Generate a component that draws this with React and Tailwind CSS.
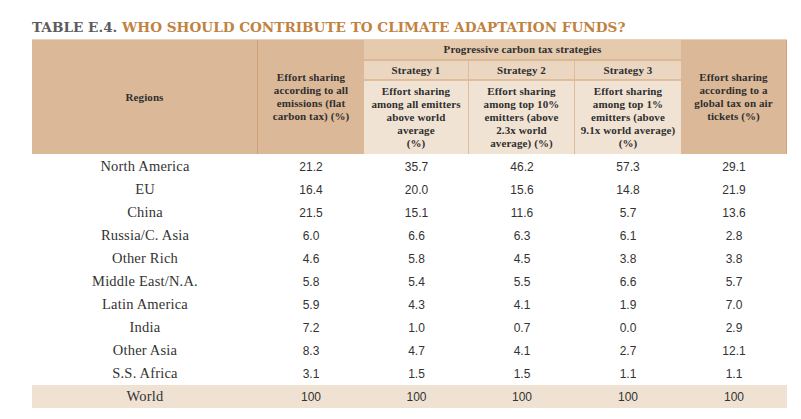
import React from "react";

const rows = [
  ["North America", "21.2", "35.7", "46.2", "57.3", "29.1"],
  ["EU", "16.4", "20.0", "15.6", "14.8", "21.9"],
  ["China", "21.5", "15.1", "11.6", "5.7", "13.6"],
  ["Russia/C. Asia", "6.0", "6.6", "6.3", "6.1", "2.8"],
  ["Other Rich", "4.6", "5.8", "4.5", "3.8", "3.8"],
  ["Middle East/N.A.", "5.8", "5.4", "5.5", "6.6", "5.7"],
  ["Latin America", "5.9", "4.3", "4.1", "1.9", "7.0"],
  ["India", "7.2", "1.0", "0.7", "0.0", "2.9"],
  ["Other Asia", "8.3", "4.7", "4.1", "2.7", "12.1"],
  ["S.S. Africa", "3.1", "1.5", "1.5", "1.1", "1.1"],
  ["World", "100", "100", "100", "100", "100"],
];

const cols = "grid-cols-[226px_106px_105px_106px_106px_106px]";

function Lines({ items }) {
  return (
    <div className="flex flex-col items-center text-center whitespace-nowrap">
      {items.map((t) => (
        <span key={t}>{t}</span>
      ))}
    </div>
  );
}

export default function App() {
  return (
    <div className="w-[801px] h-[419px] bg-white pl-[32px] pt-[17px] text-[#333]" style={{ fontFamily: '"Liberation Serif", serif' }}>
      <h1 className="text-[13.6px] leading-[21px] font-bold whitespace-nowrap" style={{ fontFamily: '"DejaVu Serif", serif' }}>
        <span className="text-[#5b5b60]">TABLE E.4. </span>
        <span className="text-[#c0823f]">WHO SHOULD CONTRIBUTE TO CLIMATE ADAPTATION FUNDS?</span>
      </h1>
      <div className={`mt-[1px] grid ${cols} grid-rows-[21px_20px_73px] w-[755px] text-[11px] leading-[13px] tracking-[0.1px] font-bold text-[#2f2f2f] border-t border-[#e8d2bb]`}>
        <div className="row-span-3 bg-[#dbb898] border-r border-[#cf9f75] flex items-center justify-center">Regions</div>
        <div className="row-span-3 bg-[#dbb898] flex items-center justify-center">
          <Lines items={["Effort sharing", "according to all", "emissions (flat", "carbon tax) (%)"]} />
        </div>
        <div className="col-span-3 bg-[#e5caad] border-b-2 border-[#dcb893] flex items-center justify-center">
          Progressive carbon tax strategies
        </div>
        <div className="row-span-3 bg-[#dbb898] border-r border-[#cfa07a] flex items-center justify-center">
          <Lines items={["Effort sharing", "according to a", "global tax on air", "tickets (%)"]} />
        </div>
        <div className="bg-[#ebd6c1] border-b-2 border-r border-[#dfbd9b] flex items-center justify-center">Strategy 1</div>
        <div className="bg-[#ebd6c1] border-b-2 border-r border-[#dfbd9b] flex items-center justify-center">Strategy 2</div>
        <div className="bg-[#ebd6c1] border-b-2 border-[#dfbd9b] flex items-center justify-center">Strategy 3</div>
        <div className="bg-[#f1e3d4] border-r border-[#dfbd9b] flex items-start justify-center pt-[4px]">
          <Lines items={["Effort sharing", "among all emitters", "above world", "average", "(%)"]} />
        </div>
        <div className="bg-[#f1e3d4] border-r border-[#dfbd9b] flex items-start justify-center pt-[4px]">
          <Lines items={["Effort sharing", "among top 10%", "emitters (above", "2.3x world", "average) (%)"]} />
        </div>
        <div className="bg-[#f1e3d4] flex items-start justify-center pt-[4px]">
          <Lines items={["Effort sharing", "among top 1%", "emitters (above", "9.1x world average)", "(%)"]} />
        </div>
      </div>
      <div className="w-[755px] pt-[1px]">
        {rows.map((r, i) => (
          <div key={r[0]} className={`grid ${cols} h-[23px] items-center ${i === rows.length - 1 ? "bg-[#efe2d3]" : ""}`}>
            <div className="text-center text-[14.5px] tracking-[0.2px] text-[#333]">{r[0]}</div>
            {r.slice(1).map((v, j) => (
              <div key={j} className="text-center text-[12px] text-[#333]" style={{ fontFamily: '"Liberation Sans", sans-serif' }}>
                {v}
              </div>
            ))}
          </div>
        ))}
      </div>
    </div>
  );
}
